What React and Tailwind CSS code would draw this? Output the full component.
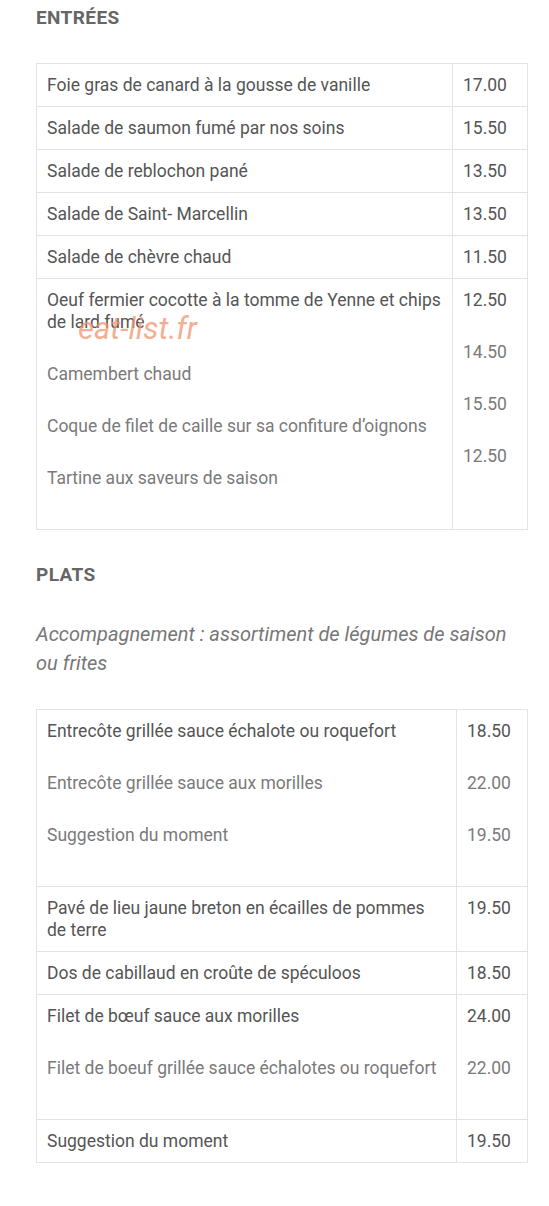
import React from "react";

const font = { fontFamily: "Roboto, 'Liberation Sans', sans-serif" };

function Cell({ items }) {
  return (
    <div className="px-[10px] pt-[10px] pb-[10px]">
      {items.map((t, i) => (
        <p
          key={i}
          className={`leading-[22px] text-[17.5px] ${i === 0 ? "text-[#555]" : "text-[#7a7a7a]"} ${items.length > 1 ? "mb-[30px]" : ""}`}
        >
          {t}
        </p>
      ))}
    </div>
  );
}

function Table({ rows, priceW }) {
  return (
    <div className="border border-[#e3e3e3] mx-[36px] w-[492px]">
      {rows.map((r, i) => (
        <div key={i} className={`flex ${i > 0 ? "border-t border-[#e3e3e3]" : ""}`}>
          <div className="flex-1 border-r border-[#e3e3e3]">
            <Cell items={r[0]} />
          </div>
          <div className={priceW}>
            <Cell items={r[1]} />
          </div>
        </div>
      ))}
    </div>
  );
}

export default function App() {
  const entrees = [
    [["Foie gras de canard à la gousse de vanille"], ["17.00"]],
    [["Salade de saumon fumé par nos soins"], ["15.50"]],
    [["Salade de reblochon pané"], ["13.50"]],
    [["Salade de Saint- Marcellin"], ["13.50"]],
    [["Salade de chèvre chaud"], ["11.50"]],
    [
      [
        "Oeuf fermier cocotte à la tomme de Yenne et chips de lard fumé",
        "Camembert chaud",
        "Coque de filet de caille sur sa confiture d’oignons",
        "Tartine aux saveurs de saison",
      ],
      ["12.50", "14.50", "15.50", "12.50"],
    ],
  ];
  const plats = [
    [
      [
        "Entrecôte grillée sauce échalote ou roquefort",
        "Entrecôte grillée sauce aux morilles",
        "Suggestion du moment",
      ],
      ["18.50", "22.00", "19.50"],
    ],
    [["Pavé de lieu jaune breton en écailles de pommes de terre"], ["19.50"]],
    [["Dos de cabillaud en croûte de spéculoos"], ["18.50"]],
    [
      [
        "Filet de bœuf sauce aux morilles",
        "Filet de boeuf grillée sauce échalotes ou roquefort",
      ],
      ["24.00", "22.00"],
    ],
    [["Suggestion du moment"], ["19.50"]],
  ];
  return (
    <div className="bg-white w-[549px] h-[1206px] relative overflow-hidden" style={font}>
      <h2 className="px-[36px] pt-[7px] text-[19px] tracking-[0.4px] font-bold leading-[22px] text-[#666]">ENTRÉES</h2>
      <div className="h-[34px]" />
      <Table rows={entrees} priceW="w-[74px]" />
      <h2 className="px-[36px] mt-[34px] text-[19px] tracking-[0.4px] font-bold leading-[22px] text-[#666]">PLATS</h2>
      <p className="px-[36px] mt-[34px] text-[20px] italic leading-[29px] text-[#777]">
        Accompagnement : assortiment de légumes de saison ou frites
      </p>
      <div className="h-[31px]" />
      <Table rows={plats} priceW="w-[70px]" />
      <div className="absolute left-[78px] top-[309px] text-[31px] italic text-[#f0956e] opacity-75 leading-[40px]">
        eat-list.fr
      </div>
    </div>
  );
}
